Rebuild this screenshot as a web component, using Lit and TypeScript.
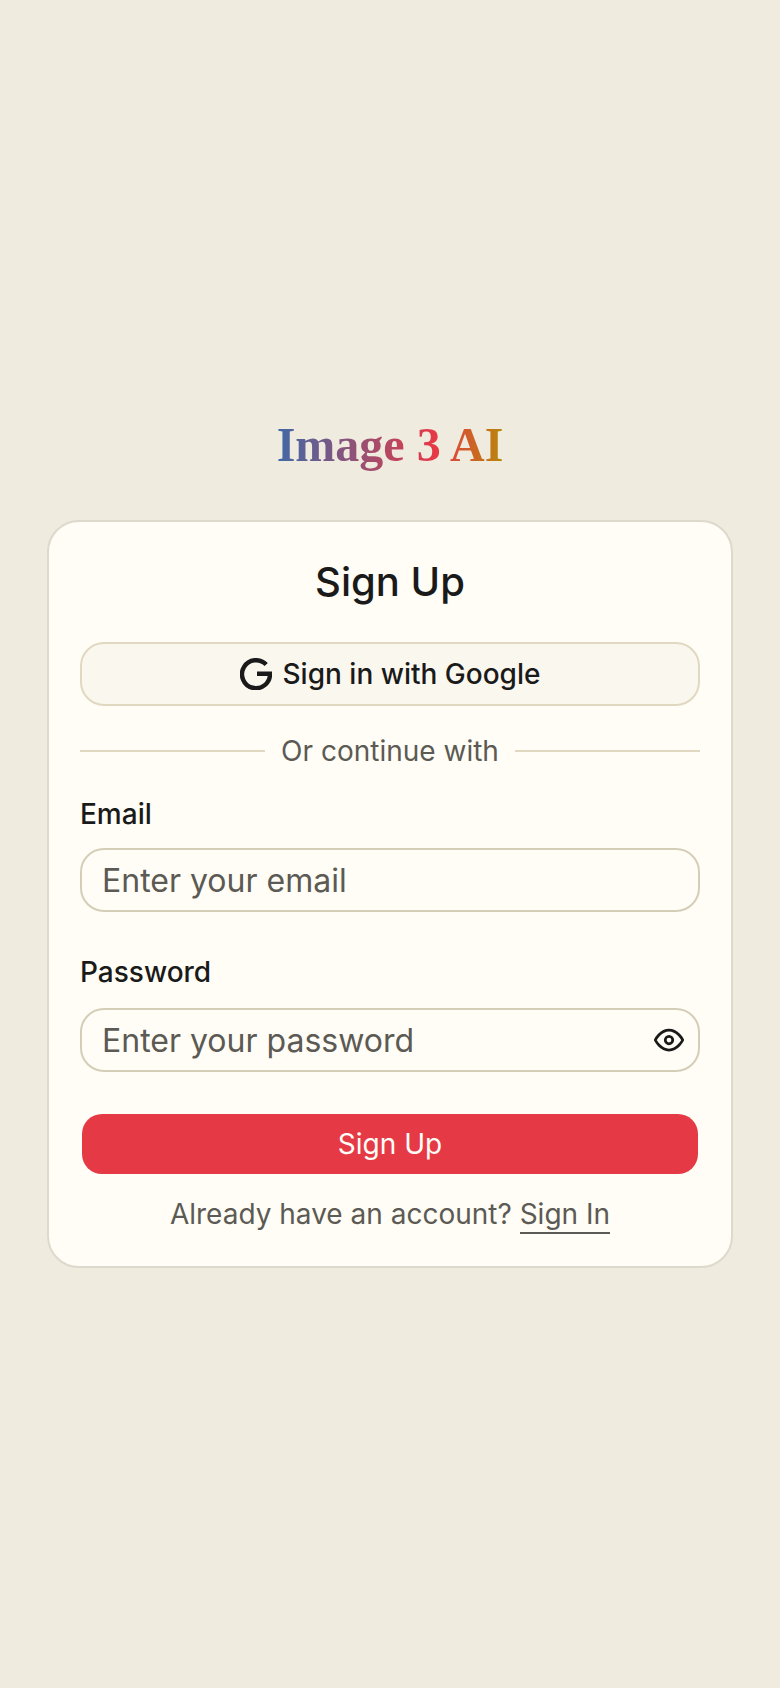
import { LitElement, html, css } from "lit";
import { customElement } from "lit/decorators.js";

@customElement("app-root")
export class AppRoot extends LitElement {
  static styles = css`
    :host {
      display: flex;
      flex-direction: column;
      align-items: center;
      justify-content: center;
      min-height: 1688px;
      background: #f0ebdf;
      font-family: Inter, "Noto Sans", sans-serif;
      color: #1a1a1a;
      box-sizing: border-box;
    }
    * { box-sizing: border-box; }
    .logo {
      font-family: "Liberation Serif", serif;
      font-weight: 700;
      font-size: 48px;
      line-height: 52px;
      margin: -1px 0 49px;
      background: linear-gradient(90deg, #4069a6, #e63946 70%, #b8860b);
      -webkit-background-clip: text;
      background-clip: text;
      color: transparent;
    }
    .card {
      width: 686.4px;
      height: 748px;
      background: #fffdf5;
      border: 2px solid #ddd9cc;
      border-radius: 32px;
      padding: 33px 31.2px 0;
      display: flex;
      flex-direction: column;
    }
    h1 {
      margin: 0 0 33px;
      font-size: 40px;
      font-weight: 500;
      line-height: 54px;
      text-align: center;
    }
    .google {
      height: 64px;
      display: flex;
      align-items: center;
      justify-content: center;
      gap: 11px;
      background: #faf7ef;
      border: 2px solid #e0d8c0;
      border-radius: 24px;
      font-size: 28px;
      font-weight: 500;
      font-family: inherit;
      color: #1a1a1a;
      width: 100%;
      padding: 0;
    }
    .divider {
      display: flex;
      align-items: center;
      gap: 16px;
      margin-top: 27px;
      height: 36px;
      font-size: 28px;
      color: #5c5a54;
    }
    .divider i { flex: 1; height: 2px; background: #e0d8c0; }
    label {
      display: block;
      font-size: 28px;
      font-weight: 500;
      line-height: 36px;
    }
    .email-label { margin-top: 27px; }
    .pw-label { margin-top: 42px; }
    .field {
      position: relative;
      margin-top: 18px;
    }
    .field.first { margin-top: 16px; }
    input {
      display: block;
      width: 100%;
      height: 64px;
      border: 2px solid #d4cdb8;
      border-radius: 24px;
      background: transparent;
      padding: 0 20px;
      font-family: inherit;
      font-size: 32px;
      color: #1a1a1a;
      outline: none;
    }
    input::placeholder { color: #5c5a54; opacity: 1; }
    .eye {
      position: absolute;
      right: 16px;
      top: 50%;
      transform: translateY(-50%);
      width: 30px;
      height: 30px;
      display: block;
    }
    .submit {
      margin: 42px 2px 0;
      height: 60px;
      border: none;
      border-radius: 20px;
      background: #e63946;
      color: #fffdf7;
      font-family: inherit;
      font-size: 28px;
      font-weight: 400;
    }
    .foot {
      margin-top: 22px;
      text-align: center;
      font-size: 28px;
      line-height: 36px;
      color: #5c5a54;
    }
    .foot a {
      color: inherit;
      text-decoration: none;
      border-bottom: 2px solid #5c5a54;
      display: inline-block;
    }
  `;

  render() {
    return html`
      <div class="logo">Image 3 AI</div>
      <div class="card">
        <h1>Sign Up</h1>
        <button class="google">
          <svg width="32" height="32" viewBox="0 0 32 32" fill="none" stroke="#1a1a1a" stroke-width="4.4">
            <path d="M26.2 6.6A14 14 0 1 0 30 15.8H17" />
          </svg>
          Sign in with Google
        </button>
        <div class="divider"><i></i><span>Or continue with</span><i></i></div>
        <label class="email-label">Email</label>
        <div class="field first"><input type="email" placeholder="Enter your email" /></div>
        <label class="pw-label">Password</label>
        <div class="field">
          <input type="password" placeholder="Enter your password" />
          <svg class="eye" viewBox="0 0 24 24" fill="none" stroke="#1a1a1a" stroke-width="2.2" stroke-linecap="round" stroke-linejoin="round">
            <path d="M1 12s4-8 11-8 11 8 11 8-4 8-11 8-11-8-11-8z" />
            <circle cx="12" cy="12" r="3" />
          </svg>
        </div>
        <button class="submit">Sign Up</button>
        <div class="foot">Already have an account? <a href="#">Sign In</a></div>
      </div>
    `;
  }
}
